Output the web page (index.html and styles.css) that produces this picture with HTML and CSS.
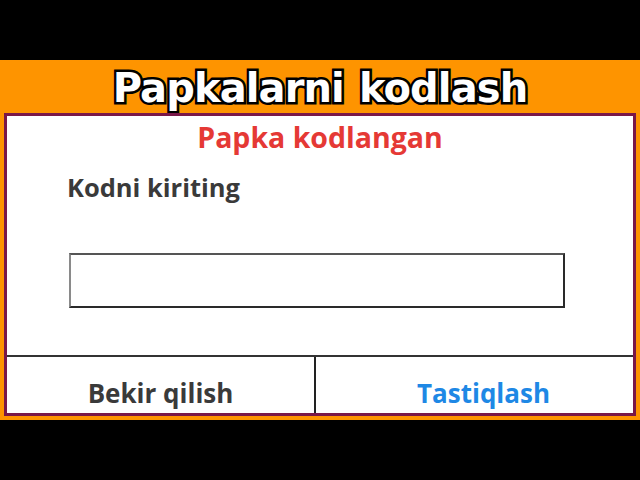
FILE: index.html
```html
<!DOCTYPE html>
<html>
<head>
<meta charset="utf-8">
<link rel="stylesheet" href="styles.css">
</head>
<body>
<div class="top-black"></div>
<div class="band">
  <div class="band-title">Papkalarni kodlash</div>
  <div class="dialog">
    <div class="dialog-body">
      <div class="dialog-title">Papka kodlangan</div>
      <div class="label">Kodni kiriting</div>
      <div class="input"></div>
    </div>
    <div class="actions">
      <div class="btn cancel">Bekir qilish</div>
      <div class="btn ok">Tastiqlash</div>
    </div>
  </div>
</div>
</body>
</html>
```
FILE: styles.css
```css
html, body {
  margin: 0;
  padding: 0;
  background: #000;
  width: 640px;
  height: 480px;
  overflow: hidden;
}
.top-black {
  height: 60px;
}
.band {
  background: #fe9400;
  height: 360px;
  box-sizing: border-box;
  padding: 0 4px 4px 4px;
  display: flex;
  flex-direction: column;
}
.band-title {
  height: 53px;
  display: flex;
  align-items: center;
  justify-content: center;
  font-family: "DejaVu Sans", sans-serif;
  font-weight: bold;
  font-size: 40px;
  letter-spacing: -0.9px;
  word-spacing: 2px;
  color: #fff;
  -webkit-text-stroke: 5px #000;
  paint-order: stroke fill;
  padding-top: 3px;
  box-sizing: border-box;
}
.dialog {
  flex: 1;
  border: 3px solid #7a1848;
  background: #fff;
  display: flex;
  flex-direction: column;
}
.dialog-body {
  flex: 1;
  display: flex;
  flex-direction: column;
}
.dialog-title {
  margin-top: 3px;
  height: 36px;
  line-height: 36px;
  text-align: center;
  font-family: "Open Sans", sans-serif;
  font-weight: bold;
  font-size: 28.5px;
  color: #e53935;
}
.label {
  margin-top: 17px;
  margin-left: 60px;
  height: 30px;
  line-height: 30px;
  font-family: "Open Sans", sans-serif;
  font-weight: bold;
  font-size: 25.5px;
  color: #3a3a3a;
}
.input {
  margin-top: 51px;
  margin-left: 62px;
  width: 492px;
  height: 51px;
  border: 2px solid #2a2a2a;
  border-left-color: #8a8a8a;
  border-top-color: #555;
}
.actions {
  height: 56px;
  border-top: 2px solid #333;
  display: flex;
}
.btn {
  display: flex;
  align-items: center;
  justify-content: center;
  padding-top: 16px;
  box-sizing: border-box;
  font-family: "Open Sans", sans-serif;
  font-weight: bold;
  font-size: 26px;
}
.cancel {
  width: 309px;
  color: #3a3a3a;
  border-right: 2px solid #222;
}
.ok {
  flex: 1;
  padding-left: 18px;
  color: #1e88e5;
}
```
